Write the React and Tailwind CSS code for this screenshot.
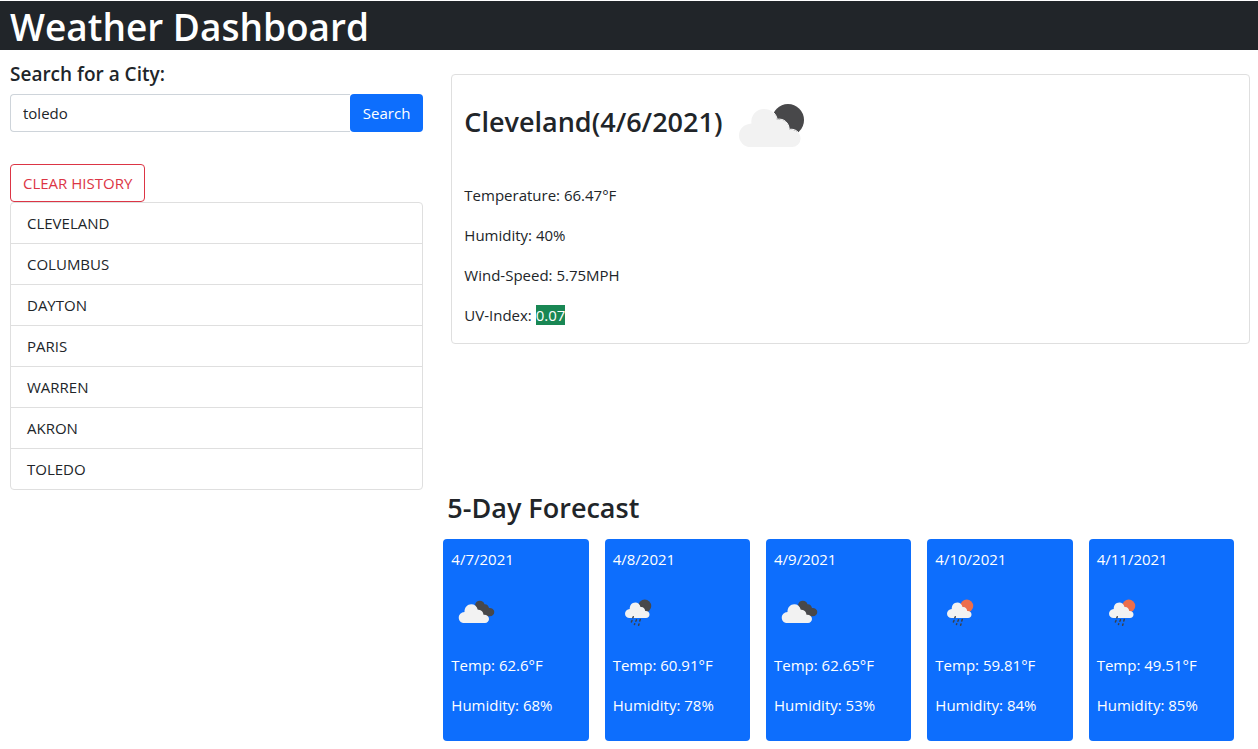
const cities = ["CLEVELAND", "COLUMBUS", "DAYTON", "PARIS", "WARREN", "AKRON", "TOLEDO"];

const forecast = [
  { date: "4/7/2021", icon: "broken", temp: "62.6", humidity: 68 },
  { date: "4/8/2021", icon: "rainNight", temp: "60.91", humidity: 78 },
  { date: "4/9/2021", icon: "broken", temp: "62.65", humidity: 53 },
  { date: "4/10/2021", icon: "rainDay", temp: "59.81", humidity: 84 },
  { date: "4/11/2021", icon: "rainDay", temp: "49.51", humidity: 85 },
];

function FewClouds() {
  return (
    <svg viewBox="0 0 100 100" className="size-[100px] shrink-0" role="img" aria-label="Few clouds">
      <circle cx="66" cy="45" r="16" fill="#48484a" />
      <path
        d="M28.500 72a11.500 11.500 0 0 1-11.500-11.500c0-6.500 5-11.500 12.500-12a12.500 12.500 0 0 1 12.500-14.500c7 0 12 4 13 11a9.500 9.500 0 0 1 12 10c1-.2 2-.3 3-.2a8.600 8.600 0 0 1 0 17.200z"
        fill="#f2f2f2"
      />
      <path d="M50.500 36.500c2.500 2 4 4.500 4.700 7.800 6.800-1.200 11.800 3.700 12 10 4-.4 7 .6 9 3" fill="none" stroke="#fff" strokeWidth="1" />
    </svg>
  );
}

function BrokenClouds() {
  return (
    <svg viewBox="0 0 100 100" className="size-[50px]" role="img" aria-label="Broken clouds">
      <path
        d="M48 36c1-5.500 4.500-8.500 9.500-8.500 5 0 8.500 2.500 9.500 7 4.500-.5 8 2.500 9 7.500 6 0 10.500 3 10.500 8 0 5-3.500 8.500-9 8.500H60z"
        fill="#48484a"
      />
      <path
        d="M26 72c-6 0-10.500-4.500-10.500-10.500S20 50.500 27 50c-.5-9 6-15.500 13.500-15.500 6.500 0 11.500 4 13 11 6.500-1 11 3.500 11.500 10 6-.7 11 3 11 8.500 0 4.500-3.500 8-8 8z"
        fill="#f2f2f2"
      />
    </svg>
  );
}

function Rain({ night }) {
  return (
    <svg viewBox="0 0 100 100" className="size-[50px]" role="img" aria-label="Rain">
      <circle cx="63.500" cy="38" r="13" fill={night ? "#48484a" : "#ec6e4c"} />
      <path
        d="M33 62c-5 0-9-3.500-9-8.500s4-9 9.500-9.300C33 36.500 38 31 44.500 31c5.500 0 9.500 3.500 10.500 9 5.500-.8 9 2.800 9.500 8 5-.5 8.500 2.500 8.500 7 0 4-3 7-7 7z"
        fill="#f2f2f2"
      />
      <g stroke="#3c4048" strokeWidth="3" strokeLinecap="round">
        <path d="M40.500 59.500l-.8 2M38 67l-1.200 3M47 65.500l-1.200 3M54.500 65l-1 3M43.500 73.500l-.6 1.500M52 74l-.8 2.500" />
      </g>
    </svg>
  );
}

function ForecastIcon({ name }) {
  if (name === "broken") return <BrokenClouds />;
  return <Rain night={name === "rainNight"} />;
}

export default function App() {
  return (
    <div className="bg-white pt-px font-['Open_Sans',sans-serif] text-[15px] leading-6 text-[#212529]">
      <header className="bg-[#212529] px-[10px] pt-[3px]">
        <h1 className="text-[37px] leading-[46px] font-semibold text-white">Weather Dashboard</h1>
      </header>

      <div className="flex gap-5 pr-2 pl-[10px]">
        <aside className="w-1/3 shrink-0 pt-3">
          <form onSubmit={(e) => e.preventDefault()}>
            <label htmlFor="city" className="mb-2 block text-[19px] leading-6 font-semibold">
              Search for a City:
            </label>
            <div className="flex">
              <input
                id="city"
                type="text"
                defaultValue="toledo"
                className="h-[38px] min-w-0 flex-1 rounded-l border border-r-0 border-[#ced4da] px-3 outline-none"
              />
              <button type="submit" className="h-[38px] rounded bg-[#0d6efd] px-[13px] text-white">
                Search
              </button>
            </div>
          </form>

          <button type="button" className="mt-8 block h-[38px] rounded border border-[#dc3545] px-3 text-[#dc3545]">
            CLEAR HISTORY
          </button>
          <ul className="divide-y divide-[#dfdfdf] rounded border border-[#dfdfdf]">
            {cities.map((city) => (
              <li key={city} className="px-4 py-2">
                {city}
              </li>
            ))}
          </ul>
        </aside>

        <main className="min-w-0 flex-1 pt-6">
          <section className="ml-2 rounded border border-[#dfdfdf] px-3 pb-4">
            <div className="mb-2 flex items-center">
              <h2 className="pb-1.5 text-[27px] leading-8 font-semibold">Cleveland(4/6/2021)</h2>
              <FewClouds />
            </div>
            <div className="flex flex-col gap-4">
              <p>Temperature: 66.47°F</p>
              <p>Humidity: 40%</p>
              <p>Wind-Speed: 5.75MPH</p>
              <p>
                UV-Index: <span className="bg-[#198754] text-white">0.07</span>
              </p>
            </div>
          </section>

          <section className="mt-[147px] pr-4">
            <h2 className="mb-[14px] pl-1 text-[27px] leading-[34px] font-semibold">5-Day Forecast</h2>
            <div className="grid grid-cols-5 gap-4">
              {forecast.map((day) => (
                <article key={day.date} className="flex flex-col gap-4 rounded bg-[#0d6efd] px-2 pt-2 pb-6 text-white">
                  <p>{day.date}</p>
                  <ForecastIcon name={day.icon} />
                  <p>Temp: {day.temp}°F</p>
                  <p>Humidity: {day.humidity}%</p>
                </article>
              ))}
            </div>
          </section>
        </main>
      </div>
    </div>
  );
}
